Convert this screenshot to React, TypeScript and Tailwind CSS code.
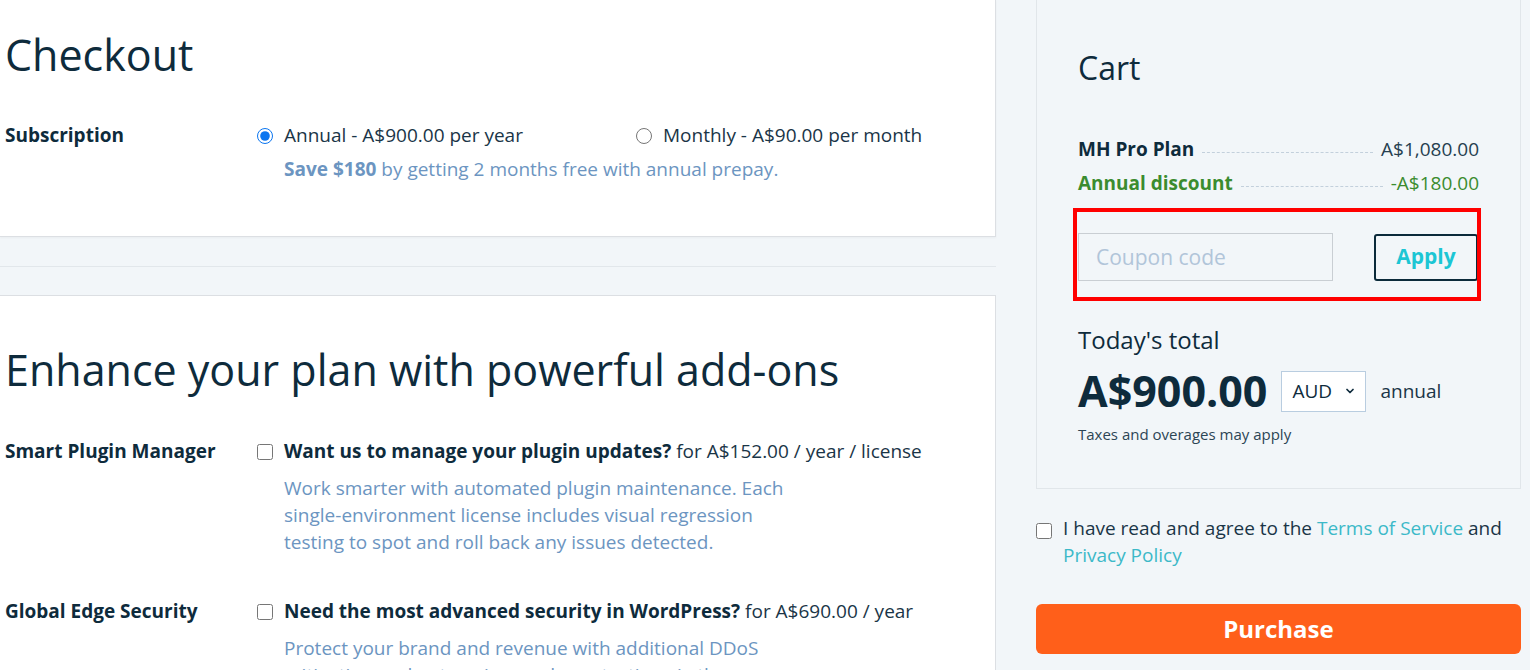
import React from 'react';

const font = { fontFamily: '"Open Sans", "Noto Sans", Arial, sans-serif' };

const Radio: React.FC<{ checked?: boolean }> = ({ checked }) => (
  <input type="radio" checked={!!checked} readOnly className="m-0 h-4 w-4 shrink-0 accent-[#0a75f0]" />
);

const Check: React.FC = () => (
  <input type="checkbox" readOnly className="m-0 h-4 w-4 shrink-0" />
);

const AddOn: React.FC<{ label: string; title: string; price: string; desc: string; className?: string }> = ({ label, title, price, desc, className }) => (
  <div className={`flex ${className || ''}`}>
    <div className="w-[252px] shrink-0 text-[19px] font-bold leading-[27px] text-[#0e2b3c]">{label}</div>
    <div className="flex-1">
      <div className="flex items-center gap-[11px]">
        <Check />
        <div className="text-[19px] leading-[27px] text-[#1a3547]">
          <span className="font-bold text-[#0e2b3c]">{title}</span> {price}
        </div>
      </div>
      <p className="mt-[10px] ml-[27px] max-w-[510px] text-[19px] leading-[27px] text-[#6c95c1]">{desc}</p>
    </div>
  </div>
);

const CartLine: React.FC<{ name: string; amount: string; green?: boolean }> = ({ name, amount, green }) => (
  <div className={`flex items-baseline text-[19px] leading-[34px] ${green ? 'text-[#3b8c2f]' : 'text-[#0e2b3c]'}`}>
    <span className="font-bold">{name}</span>
    <span className="mx-2 flex-1 translate-y-[-3px] border-b border-dashed border-[#c3d0dc]" />
    <span className={green ? 'text-[#3b8c2f]' : 'text-[#263f50]'}>{amount}</span>
  </div>
);

export default function App() {
  return (
    <div className="min-h-screen bg-[#f2f6f9]" style={font}>
      <div className="flex gap-[40px]">
        {/* Left column */}
        <div className="w-[996px] shrink-0">
          <section className="border-r border-b border-[#dcdfe3] bg-white pt-[22px] pb-[53px] pl-[5px] shadow-[0_1px_2px_rgba(0,0,0,0.04)]">
            <h1 className="text-[43px] leading-[66px] text-[#0e2b3c]">Checkout</h1>
            <div className="mt-[34px] flex">
              <div className="w-[252px] shrink-0 text-[19px] font-bold leading-[27px] text-[#0e2b3c]">Subscription</div>
              <div>
                <div className="flex">
                  <label className="flex w-[379px] items-center gap-[11px] text-[19px] leading-[27px] text-[#1a3547]">
                    <Radio checked />
                    Annual - A$900.00 per year
                  </label>
                  <label className="flex items-center gap-[11px] text-[19px] leading-[27px] text-[#1a3547]">
                    <Radio />
                    Monthly - A$90.00 per month
                  </label>
                </div>
                <p className="mt-[7px] ml-[27px] text-[19px] leading-[27px] text-[#6c95c1]">
                  <span className="font-bold">Save $180</span> by getting 2 months free with annual prepay.
                </p>
              </div>
            </div>
          </section>

          <div className="flex h-[58px] flex-col justify-center">
            <hr className="border-t border-[#e2e7eb]" />
          </div>

          <section className="border-t border-r border-[#dcdfe3] bg-white pt-[41px] pb-10 pl-[5px]">
            <h2 className="text-[43px] leading-[66px] text-[#0e2b3c]">Enhance your plan with powerful add-ons</h2>
            <AddOn
              className="mt-[35px]"
              label="Smart Plugin Manager"
              title="Want us to manage your plugin updates?"
              price="for A$152.00 / year / license"
              desc="Work smarter with automated plugin maintenance. Each single-environment license includes visual regression testing to spot and roll back any issues detected."
            />
            <AddOn
              className="mt-[42px]"
              label="Global Edge Security"
              title="Need the most advanced security in WordPress?"
              price="for A$690.00 / year"
              desc="Protect your brand and revenue with additional DDoS mitigation and enterprise-grade protection via the Cloudflare CDN."
            />
          </section>
        </div>

        {/* Right column */}
        <aside className="w-[485px] shrink-0">
          <div className="border-x border-b border-[#e1e6ea] bg-[#f2f6f9] px-[41px] pt-[47px] pb-[44px]">
            <h2 className="text-[32px] leading-[42px] text-[#0e2b3c]">Cart</h2>
            <div className="mt-[43px]">
              <CartLine name="MH Pro Plan" amount="A$1,080.00" />
              <CartLine name="Annual discount" amount="-A$180.00" green />
            </div>

            <div className="relative mt-[33px]">
              <div className="flex items-center justify-between">
                <input
                  placeholder="Coupon code"
                  readOnly
                  className="h-[48px] w-[255px] border border-[#c9ced3] bg-[#f2f6f9] px-[17px] text-[21px] text-[#0e2b3c] outline-none placeholder:text-[#b1c5d9]"
                />
                <button className="mr-[1px] h-[47px] w-[104px] rounded-[3px] border-2 border-[#0b2a3a] text-[21px] font-bold text-[#1cc6d4]">
                  Apply
                </button>
              </div>
              <div className="pointer-events-none absolute top-[-25px] right-[-2px] bottom-[-20px] left-[-5px] border-4 border-[#ff0000]" />
            </div>

            <div className="mt-[43px] text-[24px] leading-[32px] text-[#0e2b3c]">Today's total</div>
            <div className="mt-[8px] flex items-center">
              <span className="text-[43px] font-bold leading-[54px] text-[#0e2b3c]">A$900.00</span>
              <div className="ml-[14px] flex h-[41px] w-[85px] items-center justify-between border border-[#b9cde0] bg-white pr-[9px] pl-[10px] text-[19px] text-[#0e2b3c]">
                AUD
                <svg width="12" height="12" viewBox="0 0 24 24" fill="none" stroke="#0e2b3c" strokeWidth="3.5" strokeLinecap="round" strokeLinejoin="round">
                  <path d="m6 9 6 6 6-6" />
                </svg>
              </div>
              <span className="ml-[14px] text-[19px] text-[#1a3547]">annual</span>
            </div>
            <div className="mt-[6px] text-[15px] leading-[20px] text-[#2c4555]">Taxes and overages may apply</div>
          </div>

          <div className="mt-[26px] flex items-start gap-[11px]">
            <div className="pt-[6px]"><Check /></div>
            <p className="text-[19px] leading-[27px] text-[#1a3547]">
              I have read and agree to the <span className="text-[#3cb9c8]">Terms of Service</span> and{' '}
              <span className="text-[#3cb9c8]">Privacy Policy</span>
            </p>
          </div>

          <button className="mt-[35px] h-[50px] w-full rounded-[6px] bg-[#ff5f1a] text-[24px] font-bold text-white">
            Purchase
          </button>
        </aside>
      </div>
    </div>
  );
}
